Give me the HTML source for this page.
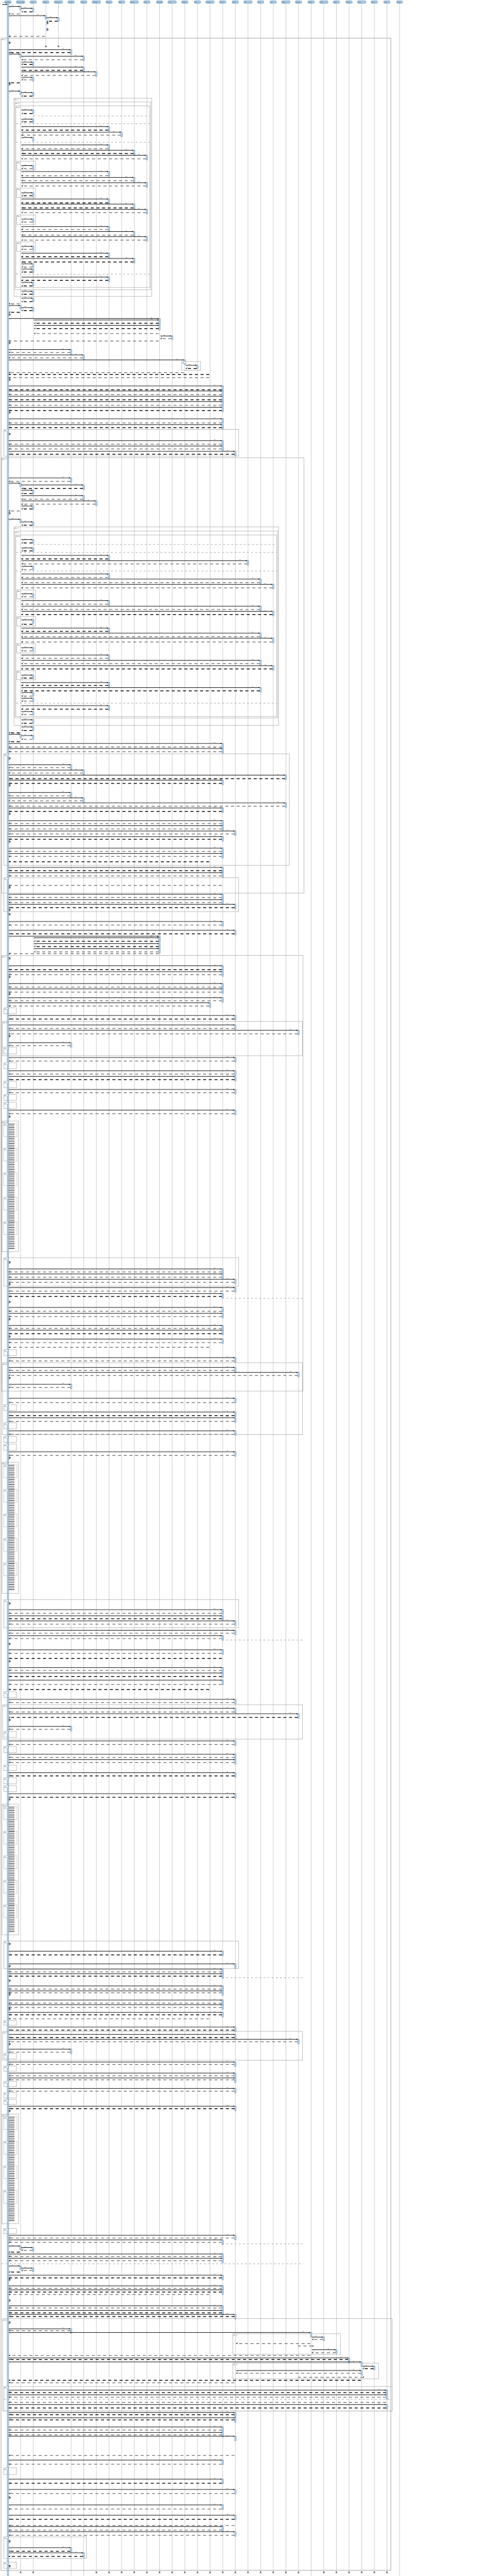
<!DOCTYPE html>
<html><head><meta charset="utf-8">
<style>
html,body{margin:0;padding:0;background:#fff;}
body{width:960px;height:5118px;overflow:hidden;font-family:"Liberation Sans",sans-serif;}
svg{display:block}
</style></head><body>
<svg id="d" width="960" height="5118" xmlns="http://www.w3.org/2000/svg" font-family="Liberation Sans, sans-serif">
<text x="4" y="5" font-size="2">sequence</text>
</svg>
<script>
var o=[];
function L(i){return i<0?3:15.4+24.5*i;}
function P(px){return px/1.625;}
function line(x1,y1,x2,y2,c,w,da){o.push('<line x1="'+x1.toFixed(1)+'" y1="'+y1.toFixed(1)+'" x2="'+x2.toFixed(1)+'" y2="'+y2.toFixed(1)+'" stroke="'+c+'" stroke-width="'+w+'"'+(da?' stroke-dasharray="'+da+'"':'')+'/>');}
function rect(x,y,w,h,f,s,sw){o.push('<rect x="'+x.toFixed(1)+'" y="'+y.toFixed(1)+'" width="'+w.toFixed(1)+'" height="'+h.toFixed(1)+'" fill="'+f+'" stroke="'+s+'" stroke-width="'+(sw||0.6)+'"/>');}
function txt(x,y,s,t,c){o.push('<text x="'+x.toFixed(1)+'" y="'+y.toFixed(1)+'" font-size="'+s+'" fill="'+(c||'#444')+'">'+t+'</text>');}
function head(x,dir,y){var d=dir>0?-2.5:2.5;o.push('<polygon points="'+x+','+y+' '+(x+d)+','+(y-1.3)+' '+(x+d)+','+(y+1.3)+'" fill="#000"/>');}
function act(i,y1,y2){rect(L(i)-1.5,y1,3,y2-y1,'#b4cde2','#6f97bc',0.6);}
function xmark(i,y){var x=L(i);line(x-1.5,y-1.5,x+1.5,y+1.5,'#222',0.8);line(x-1.5,y+1.5,x+1.5,y-1.5,'#222',0.8);}
var N=32;
var ends={};for(var i=0;i<N;i++)ends[i]=4993;
ends[3]=90;ends[4]=90;ends[0]=5114;ends[5]=5114;ends[6]=5033;ends[24]=5093;ends[31]=5092;
for(var i=0;i<N;i++){line(L(i),7,L(i),ends[i],i%2?'#d4d4d4':'#c4c4c4',i%2?1.2:0.9);}
var heads=['App Runtime','Reporter Manager','Console','Test Run','Worker Pool','Test Suite','Test File','Framework','Test Case','Hooks','Assertion','Timer','Environment','Cache','Snapshot','Mock','Transform','Runner','Result','Store','Scope','Spy','Module','Coverage','Watcher','Config','Logger','Resolver','Loader','Plugin','Output','Cleanup'];
for(var i=0;i<N;i++){var w=i==31?12:(i%3==1?17:13);o.push('<rect x="'+(L(i)-w/2)+'" y="1.3" width="'+w+'" height="5.4" rx="2.5" fill="#a9c6df" stroke="#7a9fc2" stroke-width="0.6"/>');txt(L(i)-w/2+1.5,4.9,1.8,heads[i],'#111');}
function frame(x1,y1,x2,y2,c,w){rect(x1,y1,x2-x1,y2-y1,'none',c||'#a8a8a8',w||0.8);rect(x1,y1,8,3.5,'#f4f4f4',c||'#a8a8a8',0.5);txt(x1+0.8,y1+2.8,2,'loop');}
frame(2,74,758,4989,'#a0a0a0',1);
act(0,10,5112);
function ev(data,base,f){
 data.trim().split(/\s+/).forEach(function(e){
  var a=e.split(','),t=a[0],py=+a[1],y=base+py/f;
  if(t=='c'||t=='C'){var i=+a[2],j=+a[3],x1=L(i)+1.5,x2=L(j)-1.5;if(j<i){x1=L(i)-1.5;x2=L(j)+1.5;}
    act(j,y-0.5,y+ (Math.abs(j-i)>3?9:7));
    line(x1,y,x2,y,t=='C'?'#777':'#000',t=='C'?1.8:1);head(x2,x2>x1?1:-1,y);
    txt(x2-(x2>x1?16:-2),y-1.2,1.6,'call()','#333');txt(x1+1,y+2.6,1.4,'(args)','#888');}
  else if(t=='r'||t=='R'){var i=+a[2],j=+a[3],x1=L(i)-1.5,x2=L(j)+1.5;
    line(x1,y,x2,y,t=='R'?'#808080':'#111',1.6,'6 5');head(x2,-1,y);txt(x2+1,y-1.2,1.5,'return','#888');}
  else if(t=='s'){var x=L(+a[2])+1.5;rect(x-0.2,y-2,1.2,5,'#b4cde2','#6f97bc',0.4);o.push('<path d="M'+x+' '+(y-1.5)+' h2.5 v2.5 h-2" fill="none" stroke="#000" stroke-width="0.9"/>');txt(x+3,y,1.4,'self','#666');}
  else if(t=='f'){frame(P(+a[3]),y,P(+a[4]),base+(+a[2])/f);}
  else if(t=='p'){line(P(+a[2]),y,P(+a[3]),y,'#aaa',1,'4 4');}
  else if(t=='d'){dense(y,base+(+a[2])/f);}
  else if(t=='x'){xmark(+a[2],y);}
 });
}
function dense(y1,y2){frame(4,y1,36,y2,'#a8a8a8',0.8);var k=0;
 for(var y=y1+6;y<y2-4;y+=3.4){k++;
  if(k%14==1&&y+28<y2){frame(7,y-1,33,y+24,'#b0b0b0',0.7);}
  line(17,y,28,y,k%3==0?'#000':'#777',k%3==0?1:1.6);txt(18,y-0.6,1.2,'op','#999');}
}
var z4="c,15,-1,0 c,22,0,1 c,28,1,2 r,40,2,1 R,47,1,0 C,53,0,3 c,60,3,4 r,72,4,3 s,78,3 s,100,3 R,123,3,0 s,145,0 x,157,3 x,157,4 "+
"c,168,0,5 r,178,5,0 C,183,0,1 c,190,1,6 R,202,6,1 C,210,1,2 r,218,2,1 c,227,1,6 r,238,6,1 c,243,1,7 R,255,7,1 C,262,1,2 R,270,2,1 r,280,1,0 s,285,0 C,308,0,1 c,313,1,2 r,325,2,1 "+
"f,332,1002,44,478 f,345,980,47,475 f,358,972,50,472 "+
"c,372,1,2 r,384,2,1 p,392,105,472 c,403,1,2 r,412,2,1 p,418,50,472 c,428,1,8 r,440,8,1 C,447,1,9 R,457,9,1 c,465,1,2 p,481,50,472 "+
"c,490,1,8 R,503,8,1 c,508,1,10 r,519,10,1 c,525,1,11 R,537,11,1 f,545,575,53,112 c,560,1,2 R,570,2,1 "+
"C,580,1,8 R,594,8,1 c,600,1,10 R,611,10,1 c,618,1,11 R,629,11,1 f,636,668,53,112 c,652,1,2 r,662,2,1 "+
"c,673,1,8 r,686,8,1 c,690,1,10 r,703,10,1 c,708,1,11 R,719,11,1 f,727,759,53,112 C,741,1,2 R,751,2,1 "+
"c,766,1,8 R,776,8,1 c,783,1,10 R,795,10,1 c,800,1,11 R,812,11,1 f,818,850,53,112 C,833,1,2 R,843,2,1 "+
"c,856,1,8 r,868,8,1 C,874,1,10 r,886,10,1 C,892,1,2 R,903,2,1 C,910,1,2 r,920,2,1 p,927,50,472 c,937,1,8 r,948,8,1 C,955,1,2 r,967,2,1 "+
"C,985,1,2 r,995,2,1 C,1008,1,2 r,1020,2,1 R,1027,1,0 C,1033,0,1 C,1040,1,2 r,1050,2,1 r,1056,1,0 s,1064,0 "+
"c,1077,0,12 C,1082,2,12 r,1093,12,2 c,1100,2,12 r,1111,12,2 R,1128,12,2 c,1136,12,13 R,1145,13,12 R,1153,12,0 s,1160,0 "+
"c,1182,0,5 R,1192,5,0 c,1200,0,6 R,1210,6,0 c,1217,0,14 f,1222,1252,573,632 C,1235,14,15 r,1246,15,14 R,1260,14,0 r,1266,16,0 R,1277,16,0 s,1284,0 "+
"C,1305,0,17 r,1318,17,0 C,1322,0,17 R,1334,17,0 C,1340,0,17 r,1352,17,0 c,1358,0,17 R,1370,17,0 c,1377,0,17 r,1388,17,0 s,1395,0 C,1416,0,17 R,1430,17,0 c,1436,0,17 r,1446,17,0 "+
"f,1452,1542,12,752 s,1468,0 c,1490,0,17 R,1502,17,0 c,1508,0,17 R,1518,17,0 C,1526,0,18 r,1536,18,0 f,1548,3020,5,958";
ev(z4,0,1.742);
var z5="C,48,0,5 R,60,5,0 C,66,0,1 c,72,1,6 r,84,6,1 C,90,1,2 r,101,2,1 c,108,1,6 R,120,6,1 c,126,1,7 R,137,7,1 c,143,1,2 r,153,2,1 R,160,1,0 s,168,0 c,188,0,1 C,197,1,2 r,208,2,1 "+
"f,214,885,44,878 f,228,860,47,875 f,241,855,50,872 "+
"c,257,1,2 r,268,2,1 p,273,105,872 c,285,1,2 r,295,2,1 p,300,50,872 C,310,1,8 r,322,8,1 c,328,1,19 R,339,19,1 c,347,1,2 R,358,2,1 p,363,50,872 "+
"C,373,1,8 R,385,8,1 C,390,1,20 R,402,20,1 c,408,1,21 R,420,21,1 f,427,457,53,112 c,440,1,2 R,450,2,1 "+
"c,463,1,8 R,475,8,1 C,482,1,20 R,493,20,1 c,499,1,21 r,510,21,1 f,517,549,53,112 c,528,1,2 r,543,2,1 "+
"C,556,1,8 r,567,8,1 C,573,1,20 R,585,20,1 c,590,1,21 R,603,21,1 f,608,640,53,112 c,622,1,2 R,633,2,1 "+
"c,647,1,8 R,658,8,1 c,665,1,20 R,676,20,1 c,683,1,21 r,694,21,1 f,700,731,53,112 c,715,1,2 r,725,2,1 "+
"C,740,1,8 r,750,8,1 c,757,1,20 r,768,20,1 c,774,1,2 R,786,2,1 c,793,1,2 R,803,2,1 p,810,50,872 C,818,1,8 r,830,8,1 c,838,1,2 R,848,2,1 "+
"C,866,1,2 r,878,2,1 C,890,1,2 r,902,2,1 r,910,1,0 c,915,0,1 C,919,1,2 R,932,2,1 r,940,1,0 "+
"C,946,0,17 R,958,17,0 C,963,0,17 R,974,17,0 "+
"f,981,1358,12,912 s,997,0 c,1018,0,5 R,1028,5,0 c,1036,0,6 R,1046,6,0 c,1053,0,22 r,1065,22,0 c,1070,0,17 r,1081,17,0 s,1088,0 "+
"c,1112,0,5 R,1123,5,0 c,1130,0,6 R,1140,6,0 C,1147,0,22 R,1158,22,0 c,1164,0,17 r,1176,17,0 s,1184,0 "+
"C,1207,0,17 R,1217,17,0 c,1224,0,17 R,1235,17,0 c,1242,0,18 R,1252,18,0 c,1261,0,17 r,1270,17,0 s,1278,0 C,1300,0,17 R,1311,17,0 c,1318,0,17 R,1328,17,0 r,1346,16,0 "+
"C,1365,0,17 r,1376,17,0 c,1383,0,17 R,1394,17,0 "+
"f,1400,1515,12,752 R,1426,17,0 s,1433,0 c,1456,0,17 R,1467,17,0 c,1474,0,17 R,1484,17,0 c,1490,0,18 r,1501,18,0 s,1509,0 s,1524,0 C,1548,0,17 R,1560,17,0";
ev(z5,900,1.742);
var z6="C,10,0,18 r,22,18,0 C,30,0,12 c,35,2,12 r,47,12,2 c,55,2,12 r,65,12,2 c,72,2,12 R,83,12,2 R,89,12,0 "+
"f,95,1568,5,955 s,105,0 c,130,0,17 r,143,17,0 C,150,0,17 R,160,17,0 s,168,0 c,190,0,17 R,202,17,0 c,208,0,17 R,219,17,0 s,226,0 c,238,0,17 R,248,17,0 c,255,0,16 R,266,16,0 f,272,292,12,52 "+
"C,298,0,18 r,310,18,0 f,318,434,8,953 c,330,0,18 R,342,18,0 C,348,0,23 R,360,23,0 s,368,0 c,390,0,5 R,400,5,0 f,405,428,12,52 "+
"C,440,0,18 R,452,18,0 f,458,478,12,52 c,485,0,18 R,496,18,0 c,504,0,18 r,515,18,0 f,520,542,12,52 C,548,0,18 R,559,18,0 f,565,585,12,52 f,592,612,12,52 c,618,0,18 R,630,18,0 s,640,0 "+
"d,655,1097 f,1117,1213,12,752 s,1133,0 c,1155,0,17 R,1165,17,0 c,1172,0,17 R,1183,17,0 c,1190,0,18 R,1200,18,0 s,1207,0 "+
"c,1218,0,18 R,1230,18,0 c,1238,0,17 r,1248,17,0 p,1254,700,955 s,1267,0 C,1285,0,17 R,1298,17,0 c,1305,0,17 R,1316,17,0 s,1325,0 c,1346,0,17 R,1356,17,0 c,1362,0,17 r,1374,17,0 s,1384,0 c,1392,0,17 R,1404,17,0 R,1420,16,0 f,1428,1448,12,52 "+
"C,1455,0,18 R,1466,18,0 f,1472,1715,8,953 c,1488,0,18 R,1498,18,0 c,1505,0,23 R,1515,23,0 s,1524,0 C,1545,0,5 R,1556,5,0";
ev(z6,1800,1.742);
var z7="C,20,0,18 R,32,18,0 f,38,54,12,52 C,58,0,18 r,68,18,0 c,74,0,18 R,84,18,0 f,88,105,12,52 c,110,0,18 R,120,18,0 f,125,142,12,52 f,147,164,12,52 C,168,0,18 R,178,18,0 s,185,0 "+
"d,197,560 f,577,655,12,752 s,588,0 C,605,0,17 R,615,17,0 c,622,0,17 r,630,17,0 C,636,0,18 R,645,18,0 "+
"c,662,0,18 R,670,18,0 c,677,0,17 R,685,17,0 p,689,700,955 s,700,0 c,716,0,17 R,726,17,0 r,740,17,0 s,748,0 c,765,0,17 R,773,17,0 c,780,0,17 r,790,17,0 C,800,0,17 R,812,17,0 r,826,16,0 f,832,848,12,52 "+
"C,853,0,18 R,862,18,0 f,868,963,8,953 c,878,0,18 R,888,18,0 C,893,0,23 r,903,23,0 s,910,0 c,928,0,5 R,936,5,0 f,942,958,12,52 "+
"c,968,0,18 R,978,18,0 f,983,1000,12,52 C,1005,0,18 R,1014,18,0 c,1020,0,18 R,1028,18,0 f,1035,1050,12,52 c,1056,0,18 r,1065,18,0 f,1070,1087,12,52 f,1092,1108,12,52 C,1114,0,18 r,1124,18,0 s,1130,0 "+
"d,1143,1505 f,1522,1598,12,752 s,1530,0 c,1550,0,17 r,1560,17,0";
ev(z7,2700,1.4255);
var z8="c,20,0,18 s,28,0 C,37,0,17 R,46,17,0 c,52,0,17 r,60,17,0 p,65,700,955 s,75,0 c,92,0,17 R,102,17,0 c,108,0,17 R,114,17,0 s,120,0 C,138,0,17 R,148,17,0 c,153,0,17 R,162,17,0 s,168,0 c,178,0,17 r,186,17,0 R,199,16,0 f,205,220,12,52 "+
"C,226,0,18 r,236,18,0 f,240,334,8,953 c,250,0,18 r,260,18,0 c,266,0,23 R,274,23,0 s,282,0 c,298,0,5 R,308,5,0 f,312,330,12,52 "+
"c,340,0,18 R,348,18,0 f,353,370,12,52 C,376,0,18 R,385,18,0 c,392,0,18 R,398,18,0 f,403,420,12,52 c,426,0,18 R,435,18,0 f,440,457,12,52 f,462,478,12,52 c,484,0,18 r,492,18,0 s,500,0 "+
"d,510,867 f,883,900,12,52 C,905,0,18 R,914,18,0 c,920,0,17 R,928,17,0 p,933,700,955 c,940,0,1 c,945,1,2 R,954,2,1 r,960,1,0 c,966,0,17 R,974,17,0 c,980,0,17 R,988,17,0 p,998,5,955 c,1005,0,1 c,1012,1,2 R,1020,2,1 r,1025,1,0 "+
"C,1035,0,17 r,1044,17,0 s,1050,0 c,1070,0,17 R,1078,17,0 c,1083,0,17 r,1090,17,0 R,1098,16,0 "+
"s,1118,0 c,1135,0,17 R,1142,17,0 c,1150,0,17 r,1158,17,0 c,1163,0,18 r,1170,18,0 "+
"f,1177,1478,8,1236 s,1190,0 c,1210,0,5 R,1216,5,0 c,1222,0,24 f,1226,1293,734,1073 c,1237,24,25 R,1245,25,24 R,1258,24,18 R,1266,23,24 c,1278,24,26 R,1288,26,24 R,1297,24,0 r,1310,27,0 c,1305,0,27 "+
"c,1318,0,28 f,1322,1373,734,1193 c,1332,28,29 r,1340,29,28 C,1346,18,28 R,1355,28,18 R,1368,23,28 r,1378,28,0 R,1386,18,0 "+
"f,1398,1478,12,1236 C,1410,0,30 r,1418,30,0 c,1425,0,30 R,1433,30,0 p,1440,12,1236 R,1450,30,0 c,1457,0,30 r,1468,30,0 "+
"c,1483,0,18 r,1490,18,0 c,1500,0,18 r,1507,18,0 c,1530,0,17 R,1540,17,0 c,1548,0,17 R,1556,17,0 c,1560,0,18";
ev(z8,3800,1.68);
ev("R,4766,18,0 c,4775,0,17 R,4783,17,0 f,4790,4803,12,52 c,4812,0,17 r,4820,17,0 C,4832,0,18 R,4840,18,0 s,4848,0 c,4862,0,17 R,4870,17,0 c,4882,0,18 r,4890,18,0",0,1);
var zb="R,2,18,0 c,4,0,17 R,11,17,0 c,14,0,18 R,21,18,0 f,24,66,12,272 s,33,0 C,45,0,5 r,52,5,0 C,55,0,6 r,62,6,0 f,73,85,12,52 s,81,0";
ev(zb,4900,1);
[1,2,7,8,9,10,11,12,13,14,15,16,17,18,19,20,21,22,23,25,26,27,28,29,30].forEach(function(i){xmark(i,4993);});
act(5,5006,5112);line(L(0)+1.5,5006,L(5)-1.5,5006,'#777',1.8);head(L(5)-1.5,1,5006);txt(L(5)-14,5004.5,1.6,'run()');
ev("s,5011,5 c,5022,5,6 r,5029,6,5 x,5033,6 s,5034,5 s,5057,5 s,5097,5",0,1);
act(24,5046,5093);line(L(5)+1.5,5046,L(24)-1.5,5046,'#777',1.8);head(L(24)-1.5,1,5046);
line(L(24)-1.5,5052,L(5)+1.5,5052,'#000',1.2,'5 4');head(L(5)+1.5,-1,5052);
line(L(5)+1.5,5069,L(24)-1.5,5069,'#555',1.2);head(L(24)-1.5,1,5069);
frame(599,5072,783,5090,'#bbb',1);
act(31,5078,5088);line(L(24)+1.5,5079,L(31)-1.5,5079,'#000',1);head(L(31)-1.5,1,5079);
line(L(31)-1.5,5086,L(24)+1.5,5086,'#808080',1.6,'5 4');xmark(31,5092);
line(L(24)-1.5,5093,L(5)+1.5,5093,'#000',1.2,'5 4');xmark(24,5095);
line(L(5)-1.5,5110,L(0)+1.5,5110,'#808080',1.6,'5 4');xmark(0,5115);xmark(5,5115);
document.getElementById('d').insertAdjacentHTML('beforeend',o.join(''));
</script>
</body></html>
